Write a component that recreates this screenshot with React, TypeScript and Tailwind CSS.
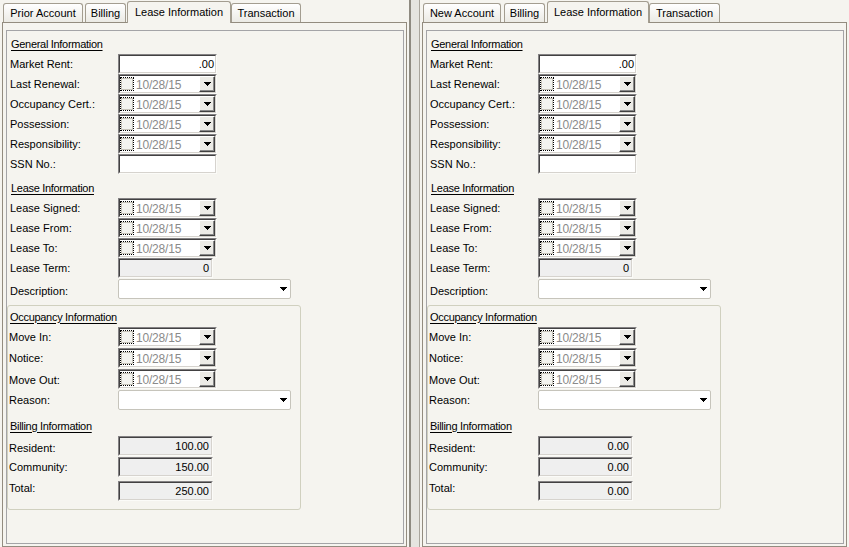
import React from "react";

type Tab = { label: string; cls: string; active?: boolean };

const leftTabs: Tab[] = [
  { label: "Prior Account", cls: "w-[80px]" },
  { label: "Billing", cls: "ml-[2px] w-[41px]" },
  { label: "Lease Information", cls: "ml-px w-[104px]", active: true },
  { label: "Transaction", cls: "w-[70px]" },
];

const rightTabs: Tab[] = [
  { label: "New Account", cls: "w-[78px]" },
  { label: "Billing", cls: "ml-[3px] w-[41px]" },
  { label: "Lease Information", cls: "ml-[2px] w-[102px]", active: true },
  { label: "Transaction", cls: "w-[71px]" },
];

function Arrow() {
  return (
    <svg width="7" height="4" viewBox="0 0 7 4" shapeRendering="crispEdges">
      <rect x="0" y="0" width="7" height="1" fill="#000" />
      <rect x="1" y="1" width="5" height="1" fill="#000" />
      <rect x="2" y="2" width="3" height="1" fill="#000" />
      <rect x="3" y="3" width="1" height="1" fill="#000" />
    </svg>
  );
}

// sunken classic edit frame
function Sunken({ w, bg, children }: { w: string; bg: string; children?: React.ReactNode }) {
  return (
    <div className={`h-[20px] ${w} border border-t-[#848284] border-l-[#848284] border-b-[#fbfbf8] border-r-[#fbfbf8]`}>
      <div className={`flex h-full w-full items-center border border-t-[#424142] border-l-[#424142] border-b-[#d6d3ce] border-r-[#d6d3ce] ${bg}`}>
        {children}
      </div>
    </div>
  );
}

function DateBox() {
  return (
    <Sunken w="w-[99px]" bg="bg-white">
      <div className="flex h-[14px] w-[14px] items-start justify-end border border-dotted border-black">
        <div className="h-[12px] w-[12px] border border-[#c5c2b8] bg-[#f3f3ef]" />
      </div>
      <span className="ml-[2px] pt-px text-[12px] tracking-[-0.2px] text-[#8a8a8a]">10/28/15</span>
      <div className="ml-auto flex h-[16px] w-[16px] items-center justify-center border border-t-white border-l-white border-b-[#404040] border-r-[#404040] bg-[#ecebe6] shadow-[inset_-1px_-1px_0_#8a8a8a]">
        <Arrow />
      </div>
    </Sunken>
  );
}

function TextBox({ value, gray }: { value?: string; gray?: boolean }) {
  return (
    <Sunken w={gray ? "w-[95px]" : "w-[99px]"} bg={gray ? "bg-[#efefef]" : "bg-white"}>
      <span className={`ml-auto ${gray ? "pr-[2px]" : "pr-px"}`}>{value}</span>
    </Sunken>
  );
}

function Combo() {
  return (
    <div className="flex h-[20px] w-[173px] items-center justify-end rounded-[2px] border border-[#c6c4bb] bg-white pr-[3px]">
      <Arrow />
    </div>
  );
}

function Row({
  label,
  inGroup,
  cls = "",
  labelCls = "",
  children,
}: {
  label: string;
  inGroup?: boolean;
  cls?: string;
  labelCls?: string;
  children: React.ReactNode;
}) {
  return (
    <div className={`flex h-[20px] items-center ${cls}`}>
      <div className={`${inGroup ? "w-[110px] pl-px" : "w-[111px] pl-[3px]"} ${labelCls}`}>{label}</div>
      {children}
    </div>
  );
}

function Heading({ text, cls }: { text: string; cls: string }) {
  return (
    <div className={`flex h-[16px] items-center tracking-[-0.3px] underline underline-offset-2 ${cls}`}>{text}</div>
  );
}

function TabStrip({ tabs, pad }: { tabs: Tab[]; pad: string }) {
  return (
    <div className={`flex h-[22px] items-end ${pad}`}>
      {tabs.map((t) =>
        t.active ? (
          <div
            key={t.label}
            className={`relative z-10 -mb-px flex h-[22px] items-center justify-center rounded-t-[3px] border border-b-0 border-[#a39d90] bg-[#f5f4ef] ${t.cls}`}
          >
            {t.label}
          </div>
        ) : (
          <div
            key={t.label}
            className={`flex h-[19px] items-center justify-center rounded-t-[3px] border border-b-0 border-[#a39d90] bg-gradient-to-b from-white to-[#ebeae4] ${t.cls}`}
          >
            {t.label}
          </div>
        )
      )}
    </div>
  );
}

function Pane({ tabs, pad, billing }: { tabs: Tab[]; pad: string; billing: string[] }) {
  return (
    <div className="flex h-full flex-col">
      <TabStrip tabs={tabs} pad={pad} />
      <div className="mx-[2px] flex h-[525px] flex-col border border-[#938c7f] bg-[#f5f4ef]">
        <div className="mb-[2px] ml-[3px] mr-[2px] mt-[7px] flex-1 border border-[#a4a4a7]">
          <Heading text="General Information" cls="mt-[5px] pl-[4px]" />
          <Row label="Market Rent:" cls="mt-[2px]">
            <TextBox value=".00" />
          </Row>
          <Row label="Last Renewal:">
            <DateBox />
          </Row>
          <Row label="Occupancy Cert.:">
            <DateBox />
          </Row>
          <Row label="Possession:">
            <DateBox />
          </Row>
          <Row label="Responsibility:">
            <DateBox />
          </Row>
          <Row label="SSN No.:">
            <TextBox />
          </Row>

          <Heading text="Lease Information" cls="mt-[6px] pl-[4px]" />
          <Row label="Lease Signed:" cls="mt-[2px]">
            <DateBox />
          </Row>
          <Row label="Lease From:">
            <DateBox />
          </Row>
          <Row label="Lease To:">
            <DateBox />
          </Row>
          <Row label="Lease Term:">
            <TextBox value="0" gray />
          </Row>
          <Row label="Description:" cls="mt-px" labelCls="pt-[4px]">
            <Combo />
          </Row>

          <div className="mt-[6px] w-[294px] rounded-[3px] border border-[#d0d0bf] pb-[8px]">
            <Heading text="Occupancy Information" cls="mt-[3px] pl-[2px]" />
            <Row label="Move In:" inGroup cls="mt-[2px]">
              <DateBox />
            </Row>
            <Row label="Notice:" inGroup cls="mt-px">
              <DateBox />
            </Row>
            <Row label="Move Out:" inGroup cls="mt-px" labelCls="pt-[2px]">
              <DateBox />
            </Row>
            <Row label="Reason:" inGroup cls="mt-px">
              <Combo />
            </Row>
            <Heading text="Billing Information" cls="mt-[8px] pl-[2px]" />
            <Row label="Resident:" inGroup cls="mt-[2px]" labelCls="pt-[4px]">
              <TextBox value={billing[0]} gray />
            </Row>
            <Row label="Community:" inGroup cls="mt-px">
              <TextBox value={billing[1]} gray />
            </Row>
            <Row label="Total:" inGroup cls="mt-[4px]" labelCls="pb-[6px]">
              <TextBox value={billing[2]} gray />
            </Row>
          </div>
        </div>
      </div>
    </div>
  );
}

export default function App() {
  return (
    <div className="flex h-[547px] w-[849px] overflow-hidden bg-[#f5f4ef] font-['Liberation_Sans',Arial,sans-serif] text-[11px] leading-none text-black">
      <div className="w-[411px] border-r-2 border-[#8f8b81]">
        <Pane tabs={leftTabs} pad="pl-[3px]" billing={["100.00", "150.00", "250.00"]} />
      </div>
      <div className="w-[9px] border-r border-[#aaa69d] bg-[#e6e5e0]" />
      <div className="w-[429px]">
        <Pane tabs={rightTabs} pad="pl-[3px]" billing={["0.00", "0.00", "0.00"]} />
      </div>
    </div>
  );
}
